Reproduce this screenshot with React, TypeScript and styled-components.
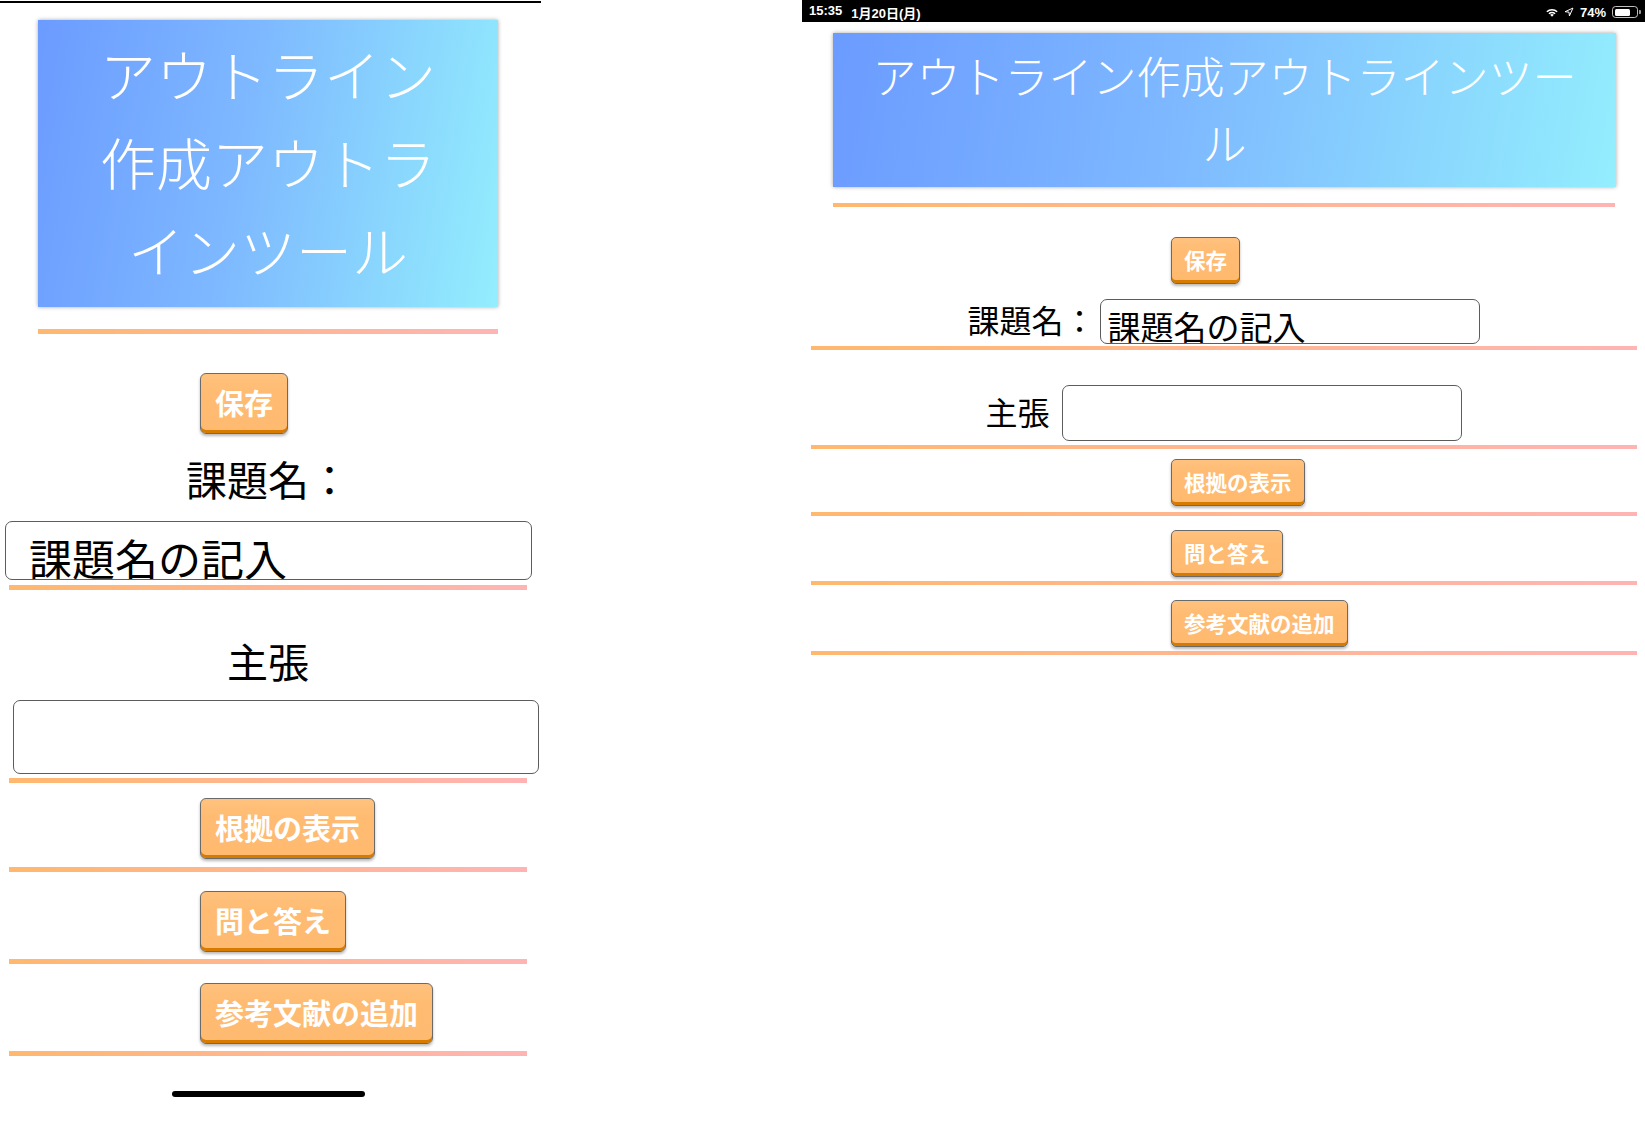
import styled, { createGlobalStyle, css } from "styled-components"

type Variant = "phone" | "tablet"

const GlobalStyle = createGlobalStyle`
  html, body {
    margin: 0;
    padding: 0;
    background: #ffffff;
  }
  body {
    font-family: "Noto Sans CJK JP", "Liberation Sans", sans-serif;
  }
`

const Page = styled.div`
  width: 1645px;
  height: 1125px;
  display: flex;
  align-items: flex-start;
  gap: 261px;
  background: #ffffff;
  overflow: hidden;
`

const Screen = styled.div<{ $w: number }>`
  width: ${p => p.$w}px;
  display: flex;
  flex-direction: column;
  align-items: flex-start;
`

const TopEdge = styled.div`
  margin-top: 1px;
  width: 541px;
  height: 2px;
  background: #000;
`

const StatusBar = styled.div`
  width: 100%;
  height: 22px;
  box-sizing: border-box;
  padding: 2px 4px 0 7px;
  background: #000;
  color: #fff;
  display: flex;
  align-items: center;
  justify-content: space-between;
  font-family: "Liberation Sans", "Noto Sans CJK JP", sans-serif;
  font-size: 13px;
  font-weight: 600;
`

const StatusLeft = styled.div`
  display: flex;
  gap: 9px;
`

const StatusRight = styled.div`
  display: flex;
  align-items: center;
  gap: 6px;
`

const Battery = styled.div`
  display: flex;
  align-items: center;
  gap: 1px;
`

const BatteryBody = styled.div`
  width: 26px;
  height: 12px;
  box-sizing: border-box;
  border: 1px solid rgba(255, 255, 255, 0.75);
  border-radius: 3.5px;
  padding: 1.5px;
`

const BatteryFill = styled.div`
  height: 100%;
  background: #fff;
  border-radius: 1.5px;
`

const BatteryNub = styled.div`
  width: 2px;
  height: 4px;
  border-radius: 0 1px 1px 0;
  background: rgba(255, 255, 255, 0.6);
`

const Header = styled.div<{ $v: Variant }>`
  box-sizing: border-box;
  background: linear-gradient(100deg, #6b9bff 0%, #7eb9ff 45%, #93eefd 100%);
  box-shadow: 0 0 4px rgba(0, 0, 0, 0.35);
  color: #fff;
  text-align: center;
  font-family: "Liberation Serif", "Noto Sans CJK JP", serif;
  font-weight: 300;
  ${p => p.$v === "phone" ? css`
    margin: 17px 0 0 38px;
    width: 460px;
    height: 287px;
    padding: 14px 50px 0;
    font-size: 56px;
    line-height: 88px;
  ` : css`
    margin: 11px 0 0 31px;
    width: 783px;
    height: 154px;
    padding: 13px 30px 0;
    font-size: 44px;
    line-height: 67px;
  `}
`

const Rule = styled.div<{ $mt: number, $ml: number, $w: number, $h?: number }>`
  margin: ${p => p.$mt}px 0 0 ${p => p.$ml}px;
  width: ${p => p.$w}px;
  height: ${p => p.$h ?? 5}px;
  background: linear-gradient(to right, #ffb86e, #ffb4b4);
`

const ButtonRow = styled.div<{ $mt: number, $pl: number }>`
  margin-top: ${p => p.$mt}px;
  padding-left: ${p => p.$pl}px;
  display: flex;
`

const ActionButton = styled.button<{ $v: Variant }>`
  box-sizing: border-box;
  margin: 0;
  background: linear-gradient(to bottom, #ffc27e 0%, #ffbb72 30%, #ffba70 100%);
  border: 1px solid #6a6a6a;
  color: #fff;
  font-family: "Noto Sans CJK JP", sans-serif;
  font-weight: 700;
  white-space: nowrap;
  box-shadow: inset 0 -3px 0 #d77b00, 0 2px 3px rgba(0, 0, 0, 0.28);
  cursor: pointer;
  ${p => p.$v === "phone" ? css`
    height: 61px;
    padding: 0 14px 3px;
    font-size: 29px;
    border-radius: 6px;
  ` : css`
    height: 47px;
    padding: 0 12px 3px;
    font-size: 21.5px;
    border-radius: 5px;
  `}
`

const Label = styled.div<{ $mt: number, $size: number }>`
  margin-top: ${p => p.$mt}px;
  width: 536px;
  text-align: center;
  font-family: "Liberation Serif", "Noto Sans CJK JP", serif;
  font-size: ${p => p.$size}px;
  line-height: 48px;
  color: #000;
`

const TextBox = styled.input<{ $mt?: number, $ml?: number, $w: number, $h: number, $size: number, $pl: number, $pt: number }>`
  box-sizing: border-box;
  margin: ${p => p.$mt ?? 0}px 0 0 ${p => p.$ml ?? 0}px;
  width: ${p => p.$w}px;
  height: ${p => p.$h}px;
  padding: ${p => p.$pt}px 4px 0 ${p => p.$pl}px;
  border: 1.5px solid #5c5c5c;
  border-radius: 7px;
  background: #fff;
  color: #000;
  font-family: "Noto Sans CJK JP", sans-serif;
  font-size: ${p => p.$size}px;
  outline: none;
`

const FieldRow = styled.div<{ $mt: number, $h: number, $gap: number }>`
  margin-top: ${p => p.$mt}px;
  width: 100%;
  height: ${p => p.$h}px;
  display: flex;
  justify-content: center;
  align-items: center;
  gap: ${p => p.$gap}px;
`

const RowLabel = styled.span<{ $size: number }>`
  font-family: "Liberation Serif", "Noto Sans CJK JP", serif;
  font-size: ${p => p.$size}px;
  color: #000;
  white-space: nowrap;
  margin-top: -5px;
`

const HomeIndicator = styled.div`
  margin: 35px 0 0 172px;
  width: 193px;
  height: 6px;
  border-radius: 3px;
  background: #000;
`

const WifiIcon = () => (
  <svg width="12" height="9" viewBox="0 0 22 16" fill="#fff">
    <path d="M11 16 L7.6 12.3 A5 5 0 0 1 14.4 12.3 Z" />
    <path d="M4.4 9.4 A9.6 9.6 0 0 1 17.6 9.4 L15.6 11.4 A6.8 6.8 0 0 0 6.4 11.4 Z" />
    <path d="M0.6 5.6 A15 15 0 0 1 21.4 5.6 L19.4 7.7 A12.2 12.2 0 0 0 2.6 7.7 Z" />
  </svg>
)

const LocationIcon = () => (
  <svg width="10" height="10" viewBox="0 0 14 14" fill="none" stroke="#fff" strokeWidth="1.4" strokeLinejoin="round">
    <path d="M12.5 1.5 L1.5 6.6 L7 7.2 L7.6 12.5 Z" />
  </svg>
)

export default function App() {
  return (
    <Page>
      <GlobalStyle />
      <Screen $w={541}>
        <TopEdge />
        <Header $v="phone">アウトライン作成アウトラインツール</Header>
        <Rule $mt={22} $ml={38} $w={460} />
        <ButtonRow $mt={39} $pl={200}>
          <ActionButton $v="phone">保存</ActionButton>
        </ButtonRow>
        <Label $mt={24} $size={41}>課題名：</Label>
        <TextBox $mt={15} $ml={5} $w={527} $h={59} $size={43} $pl={23} $pt={12} defaultValue="課題名の記入" />
        <Rule $mt={5} $ml={9} $w={518} />
        <Label $mt={50} $size={41}>主張</Label>
        <TextBox $mt={12} $ml={13} $w={526} $h={74} $size={40} $pl={23} $pt={0} />
        <Rule $mt={4} $ml={9} $w={518} />
        <ButtonRow $mt={15} $pl={200}>
          <ActionButton $v="phone">根拠の表示</ActionButton>
        </ButtonRow>
        <Rule $mt={8} $ml={9} $w={518} />
        <ButtonRow $mt={19} $pl={200}>
          <ActionButton $v="phone">問と答え</ActionButton>
        </ButtonRow>
        <Rule $mt={7} $ml={9} $w={518} />
        <ButtonRow $mt={19} $pl={200}>
          <ActionButton $v="phone">参考文献の追加</ActionButton>
        </ButtonRow>
        <Rule $mt={7} $ml={9} $w={518} />
        <HomeIndicator />
      </Screen>

      <Screen $w={843}>
        <StatusBar>
          <StatusLeft>
            <span>15:35</span>
            <span>1月20日(月)</span>
          </StatusLeft>
          <StatusRight>
            <WifiIcon />
            <LocationIcon />
            <span>74%</span>
            <Battery>
              <BatteryBody>
                <BatteryFill style={{ width: "74%" }} />
              </BatteryBody>
              <BatteryNub />
            </Battery>
          </StatusRight>
        </StatusBar>
        <Header $v="tablet">アウトライン作成アウトラインツール</Header>
        <Rule $mt={16} $ml={31} $w={782} $h={4} />
        <ButtonRow $mt={30} $pl={369}>
          <ActionButton $v="tablet">保存</ActionButton>
        </ButtonRow>
        <FieldRow $mt={15} $h={45} $gap={4}>
          <RowLabel $size={32}>課題名：</RowLabel>
          <TextBox $w={380} $h={45} $size={33} $pl={7} $pt={9} defaultValue="課題名の記入" />
        </FieldRow>
        <Rule $mt={2} $ml={9} $w={826} $h={4} />
        <FieldRow $mt={35} $h={56} $gap={12}>
          <RowLabel $size={32}>主張</RowLabel>
          <TextBox $w={400} $h={56} $size={32} $pl={7} $pt={0} />
        </FieldRow>
        <Rule $mt={4} $ml={9} $w={826} $h={4} />
        <ButtonRow $mt={10} $pl={369}>
          <ActionButton $v="tablet">根拠の表示</ActionButton>
        </ButtonRow>
        <Rule $mt={6} $ml={9} $w={826} $h={4} />
        <ButtonRow $mt={14} $pl={369}>
          <ActionButton $v="tablet">問と答え</ActionButton>
        </ButtonRow>
        <Rule $mt={4} $ml={9} $w={826} $h={4} />
        <ButtonRow $mt={15} $pl={369}>
          <ActionButton $v="tablet">参考文献の追加</ActionButton>
        </ButtonRow>
        <Rule $mt={4} $ml={9} $w={826} $h={4} />
      </Screen>
    </Page>
  )
}
